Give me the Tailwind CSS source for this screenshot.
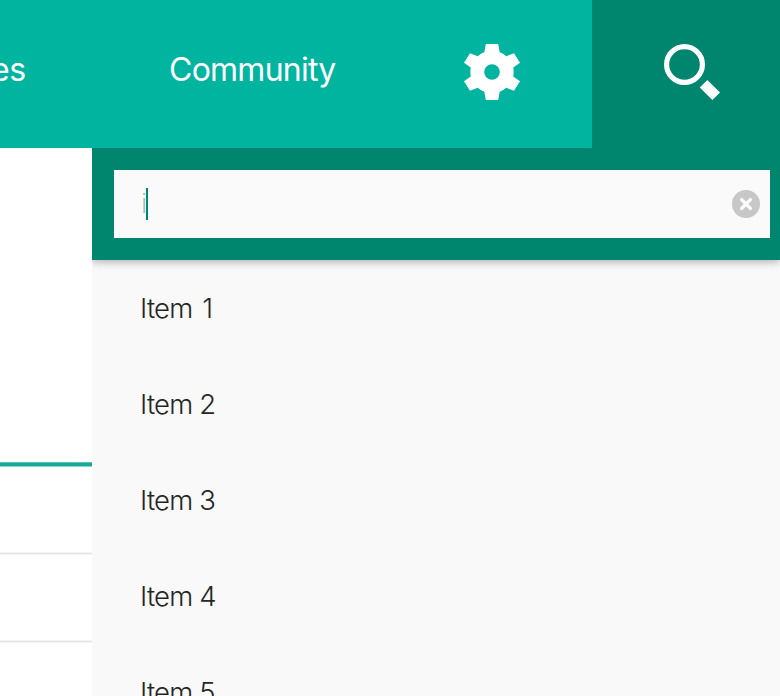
<!DOCTYPE html>
<html lang="en">
<head>
<meta charset="utf-8">
<title>Search</title>
<script src="https://cdn.jsdelivr.net/npm/@tailwindcss/browser@4"></script>
</head>
<body class="h-[696px] w-[780px] overflow-hidden bg-white font-['Inter','Liberation_Sans',sans-serif] flex flex-col">
  <header class="flex h-[148px] shrink-0 bg-[#00b49f] text-white">
    <nav class="flex w-[592px] pt-[45px] text-[32px] leading-[49px] font-[370] whitespace-nowrap">
      <a class="w-[170px] -ml-[9px] tracking-[-0.5px]">es</a>
      <a class="w-[303px] pl-[8px] tracking-[-0.75px]">Community</a>
      <svg class="-mt-px h-14 w-14 shrink-0" viewBox="0 0 56 56" fill="#fff"><path fill-rule="evenodd" d="M21.800 0H34.200L35.700 8.300Q39.300 9.500 42.300 12.200L50 9.300L56 18.700L49.300 23.500Q50 28 49.300 32.500L56 37.300L50 46.700L42.300 43.800Q39.300 46.500 35.700 47.700L34.200 56H21.800L20.300 47.700Q16.700 46.500 13.700 43.800L6 46.700L0 37.300L6.700 32.500Q6 28 6.700 23.500L0 18.700L6 9.300L13.700 12.200Q16.700 9.500 20.300 8.300ZM28 20.200A7.800 7.800 0 1 0 28 35.800A7.800 7.800 0 1 0 28 20.200Z"/></svg>
    </nav>
    <button class="flex flex-1 bg-[#00856f] pt-[44px] pl-[72px]">
      <svg class="h-14 w-14" viewBox="0 0 56 56"><circle cx="20.500" cy="20.500" r="17.900" fill="none" stroke="#fff" stroke-width="5.200"/><path fill="#fff" d="M43.300 36L56 48.600L48.400 56L35.800 43.400Z"/></svg>
    </button>
  </header>
  <div class="flex min-h-0 flex-1">
    <aside class="w-[92px] shrink-0">
      <div class="h-[314px]"></div>
      <div class="h-px bg-[#57c4b5]"></div>
      <div class="h-[3px] bg-[#16aa98]"></div>
      <div class="h-px bg-[#8ad6cb]"></div>
      <div class="h-[85px]"></div>
      <div class="h-px bg-[#f2f2f2]"></div><div class="h-px bg-[#e5e5e5]"></div><div class="h-px bg-[#f4f4f4]"></div>
      <div class="h-[85px]"></div>
      <div class="h-px bg-[#f2f2f2]"></div><div class="h-px bg-[#e5e5e5]"></div><div class="h-px bg-[#f4f4f4]"></div>
    </aside>
    <section class="flex flex-1 flex-col overflow-hidden bg-[#f9f9f9]">
      <div class="z-10 h-[112px] shrink-0 bg-[#00856f] pt-[22px] pr-[10px] pl-[22px] shadow-[0_2px_8px_rgba(0,0,0,0.3)]">
        <div class="flex h-[68px] items-center bg-[#fafafa] pr-[10px] pl-[27px]">
          <span class="w-[5px] text-[27px] leading-8 font-[200] text-[#00856f]/60">i</span>
          <span class="h-8 w-[2px] bg-[#00856f]"></span>
          <svg class="ml-auto h-7 w-7" viewBox="0 0 28 28"><circle cx="14" cy="14" r="14" fill="#c7c7c7"/><path d="M9.500 9.500L18.500 18.500M18.500 9.500L9.500 18.500" stroke="#fafafa" stroke-width="3.200" stroke-linecap="round"/></svg>
        </div>
      </div>
      <ul class="pl-[48px] text-[27.500px] leading-[96px] font-light tracking-[-0.8px] text-[#262626]">
        <li class="h-24 [word-spacing:3px]">Item 1</li>
        <li class="h-24">Item 2</li>
        <li class="h-24">Item 3</li>
        <li class="h-24">Item 4</li>
        <li class="h-24">Item 5</li>
      </ul>
    </section>
  </div>
</body>
</html>
